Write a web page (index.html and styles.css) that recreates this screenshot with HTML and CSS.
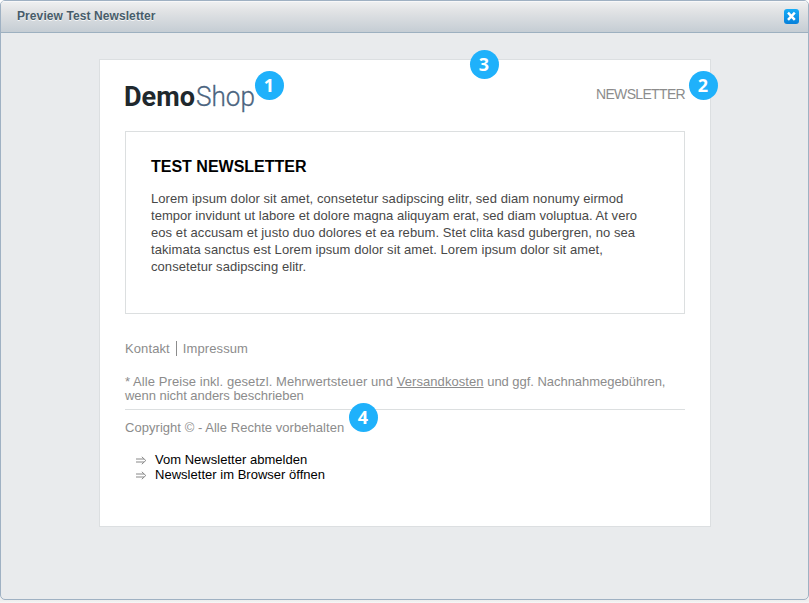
FILE: index.html
```html
<!DOCTYPE html>
<html lang="de">
<head>
<meta charset="utf-8">
<title>Preview Test Newsletter</title>
<link rel="stylesheet" href="styles.css">
</head>
<body>
<div class="window">
  <header class="titlebar">
    <h1>Preview Test Newsletter</h1>
    <button class="close" aria-label="Close"><svg width="15" height="15" viewBox="0 0 15 15"><path d="M4 3.7 10.8 10.8M10.8 3.7 4 10.8" stroke="#fff" stroke-width="2.5"/></svg></button>
  </header>
  <main class="mail">
    <div class="mailhead">
      <svg class="logo" width="132" height="34" viewBox="0 0 132 34">
        <text class="demo" x="-1" y="21" textLength="71" lengthAdjust="spacingAndGlyphs">Demo</text>
        <text class="shop" x="71" y="21" textLength="59" lengthAdjust="spacingAndGlyphs">Shop</text>
      </svg>
      <span class="kind">NEWSLETTER</span>
    </div>
    <section class="box">
      <h2>TEST NEWSLETTER</h2>
      <p>Lorem ipsum dolor sit amet, consetetur sadipscing elitr, sed diam nonumy eirmod<br><span class="tight">tempor invidunt ut labore et dolore magna aliquyam erat, sed diam voluptua. At vero</span><br>eos et accusam et justo duo dolores et ea rebum. Stet clita kasd gubergren, no sea<br>takimata sanctus est Lorem ipsum dolor sit amet. Lorem ipsum dolor sit amet,<br>consetetur sadipscing elitr.</p>
    </section>
    <footer>
      <div class="links"><span>Kontakt</span><i></i><span>Impressum</span></div>
      <p class="prices"><span class="wide">* Alle Preise inkl. gesetzl. Mehrwertsteuer und <u>Versandkosten</u></span><span class="narrow"> und ggf. Nachnahmegebühren,<br>wenn nicht anders beschrieben</span></p>
      <p class="copy">Copyright © - Alle Rechte vorbehalten</p>
      <ul>
        <li><svg width="11" height="9" viewBox="0 0 11 9"><path d="M0 3H8M0 6H8M5.8 .8 9.8 4.5 5.8 8.2"/></svg>Vom Newsletter abmelden</li>
        <li><svg width="11" height="9" viewBox="0 0 11 9"><path d="M0 3H8M0 6H8M5.8 .8 9.8 4.5 5.8 8.2"/></svg>Newsletter im Browser öffnen</li>
      </ul>
    </footer>
    <b class="pin p1">1</b><b class="pin p2">2</b><b class="pin p3">3</b><b class="pin p4">4</b>
  </main>
</div>
</body>
</html>
```
FILE: styles.css
```css
* { box-sizing: border-box; }
body { margin: 0; height: 603px; background: linear-gradient(#fff 0 590px, #eeeeee 601px, #f8f8f8); font: 13px/17px "Liberation Sans", Arial, sans-serif; overflow: hidden; }
h1, h2, p, ul { margin: 0; padding: 0; }
.window { width: 809px; height: 600px; border: 1px solid #9fb1c3; border-radius: 5px; background: #e9ebed; overflow: hidden; }
.titlebar { height: 32px; display: flex; justify-content: space-between; border-bottom: 1px solid #9db0c0; padding: 8px 9px 0 16px; background: linear-gradient(#f0f1f2, #e0e2e4 35%, #c5cdd4); box-shadow: inset 0 1px #f8f8f9; }
h1 { font-size: 12px; line-height: 14px; letter-spacing: .09px; color: #475c6a; text-shadow: 0 1px #f3f5f6; white-space: nowrap; }
.close { width: 15px; height: 15px; padding: 0; border: 0; border-radius: 3px; background: linear-gradient(#16adf8, #0680da); }
.close svg { display: block; }
.mail { position: relative; width: 612px; height: 468px; margin: 26px 0 0 98px; padding: 25px; border: 1px solid #dcdfe1; background: #fff; }
.mailhead { height: 46px; display: flex; justify-content: space-between; }
.logo { overflow: visible; }
.demo { font: 700 28.5px Roboto, sans-serif; fill: #20282d; }
.shop { font: 300 28.5px Roboto, sans-serif; fill: #4c6580; stroke: #4c6580; stroke-width: .3; }
.kind { padding-top: 1px; font-size: 14px; letter-spacing: -.67px; color: #8c8c8c; }
.box { height: 183px; padding: 26px 0 0 25px; border: 1px solid #dcdfe0; color: #484848; white-space: nowrap; }
h2 { font-size: 16px; line-height: 18px; margin-bottom: 14px; color: #000; }
.box p { letter-spacing: .07px; }
.box .tight { letter-spacing: .04px; }
footer { color: #8c8c8c; white-space: nowrap; }
.links { display: flex; align-items: center; height: 17px; margin-top: 26px; letter-spacing: .1px; }
.links i { width: 1px; height: 15px; margin: -1px 6px 0; background: #8c8c8c; }
.prices { margin-top: 18px; padding-bottom: 6px; line-height: 14px; border-bottom: 1px solid #dcdfe0; }
.wide { letter-spacing: .075px; }
.narrow { letter-spacing: -.04px; }
.copy { margin-top: 10px; line-height: 16px; letter-spacing: .04px; }
ul { list-style: none; margin-top: 16px; color: #000; }
li { display: flex; align-items: center; height: 15px; padding-left: 11px; gap: 8px; letter-spacing: .02px; }
li svg { fill: none; stroke: #888; stroke-width: 1; margin-top: 2px; }
.pin { position: absolute; width: 29px; height: 29px; border-radius: 50%; background: #1fb1fb; color: #fff; font: 700 18px/29px "Open Sans", sans-serif; text-align: center; text-indent: -1px; }
.p1 { left: 155px; top: 11px; }
.p2 { left: 589px; top: 11px; }
.p3 { left: 370px; top: -10px; }
.p4 { left: 249px; top: 343px; }
```
